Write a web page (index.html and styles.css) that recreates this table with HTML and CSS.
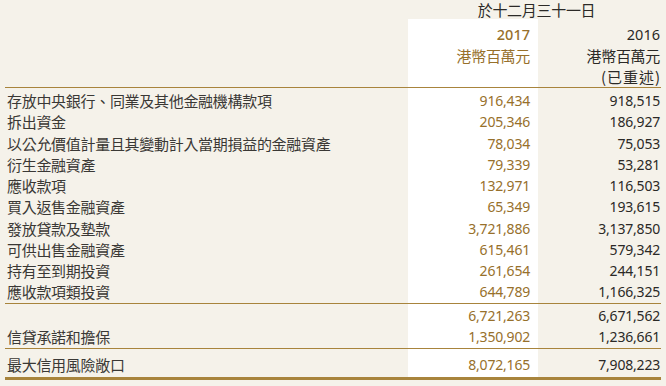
FILE: index.html
```html
<!DOCTYPE html>
<html lang="zh-Hant">
<head>
<meta charset="utf-8">
<link rel="stylesheet" href="styles.css">
</head>
<body>
<table class="report">
  <colgroup>
    <col class="c-label">
    <col class="c-cur">
    <col class="c-prev">
  </colgroup>
  <thead>
    <tr class="period-row">
      <th></th>
      <th colspan="2" class="period">於十二月三十一日</th>
    </tr>
    <tr class="year-row first">
      <th></th>
      <th class="cur">2017</th>
      <th class="prev">2016</th>
    </tr>
    <tr class="year-row">
      <th></th>
      <th class="cur cjk">港幣百萬元</th>
      <th class="prev cjk">港幣百萬元</th>
    </tr>
    <tr class="year-row last">
      <th></th>
      <th class="cur"></th>
      <th class="prev cjk restated">(已重述)</th>
    </tr>
  </thead>
  <tbody class="block main">
    <tr class="first"><td class="label">存放中央銀行、同業及其他金融機構款項</td><td class="cur">916,434</td><td class="prev">918,515</td></tr>
    <tr><td class="label">拆出資金</td><td class="cur">205,346</td><td class="prev">186,927</td></tr>
    <tr><td class="label">以公允價值計量且其變動計入當期損益的金融資產</td><td class="cur">78,034</td><td class="prev">75,053</td></tr>
    <tr><td class="label">衍生金融資產</td><td class="cur">79,339</td><td class="prev">53,281</td></tr>
    <tr><td class="label">應收款項</td><td class="cur">132,971</td><td class="prev">116,503</td></tr>
    <tr><td class="label">買入返售金融資產</td><td class="cur">65,349</td><td class="prev">193,615</td></tr>
    <tr><td class="label">發放貸款及墊款</td><td class="cur">3,721,886</td><td class="prev">3,137,850</td></tr>
    <tr><td class="label">可供出售金融資產</td><td class="cur">615,461</td><td class="prev">579,342</td></tr>
    <tr><td class="label">持有至到期投資</td><td class="cur">261,654</td><td class="prev">244,151</td></tr>
    <tr class="last"><td class="label">應收款項類投資</td><td class="cur">644,789</td><td class="prev">1,166,325</td></tr>
  </tbody>
  <tbody class="block sub">
    <tr class="first"><td class="label"></td><td class="cur">6,721,263</td><td class="prev">6,671,562</td></tr>
    <tr class="last"><td class="label">信貸承諾和擔保</td><td class="cur">1,350,902</td><td class="prev">1,236,661</td></tr>
  </tbody>
  <tbody class="block total">
    <tr><td class="label">最大信用風險敞口</td><td class="cur">8,072,165</td><td class="prev">7,908,223</td></tr>
  </tbody>
</table>
</body>
</html>
```

FILE: styles.css
```css
html, body {
  margin: 0;
  padding: 0;
  background: #f5f2ea;
}

body {
  width: 666px;
  height: 386px;
  overflow: hidden;
  font-family: "Noto Sans CJK TC", "Noto Sans", sans-serif;
  color: #3a3835;
}

.report {
  border-collapse: collapse;
  table-layout: fixed;
  width: 656px;
  margin-left: 5px;
}

.c-label { width: 403px; }
.c-cur { width: 130px; }
.c-prev { width: 123px; }

th, td {
  padding: 0;
  font-weight: 400;
  white-space: nowrap;
}

/* header */
.period-row th {
  height: 19px;
  line-height: 19px;
  font-size: 15px;
  letter-spacing: -0.3px;
  text-align: center;
  color: #2c2a27;
  vertical-align: top;
}
.period-row .period {
  padding-left: 4px;
}

.year-row th {
  height: 21px;
  line-height: 21px;
  font-family: "Noto Sans", "Open Sans", sans-serif;
  font-size: 14.5px;
  text-align: right;
}
.year-row.first th { height: 26px; vertical-align: bottom; }
.year-row.first th.cur { font-weight: 500; }
.year-row.last th { border-bottom: 1px solid #a8843c; }
.year-row th.cjk {
  font-family: "Noto Sans CJK TC", sans-serif;
  font-size: 15px;
  letter-spacing: -0.3px;
}
.year-row th.restated { letter-spacing: 1px; padding-right: 0; }

.cur {
  background: #ffffff;
  color: #97702b;
  padding-right: 8px;
  text-align: right;
}
.prev {
  color: #2b2926;
  padding-right: 1px;
  text-align: right;
}

/* body rows */
td {
  height: 21.25px;
  line-height: 21px;
  font-family: "Noto Sans", "Open Sans", sans-serif;
  font-size: 14px;
  letter-spacing: -0.2px;
}
td.label {
  font-family: "Noto Sans CJK TC", sans-serif;
  font-size: 15px;
  letter-spacing: -0.3px;
  padding-left: 2px;
  color: #3a3835;
}

.block .first td { padding-top: 2px; }
.block.main .last td { border-bottom: 1px solid #a8843c; }
.block.sub .first td { padding-top: 1px; }
.block.sub .last td { border-bottom: 1px solid #a8843c; padding-bottom: 1px; }
.block.total td {
  padding-top: 5px;
  padding-bottom: 2px;
  border-bottom: 3px solid #a8843c;
}
```
